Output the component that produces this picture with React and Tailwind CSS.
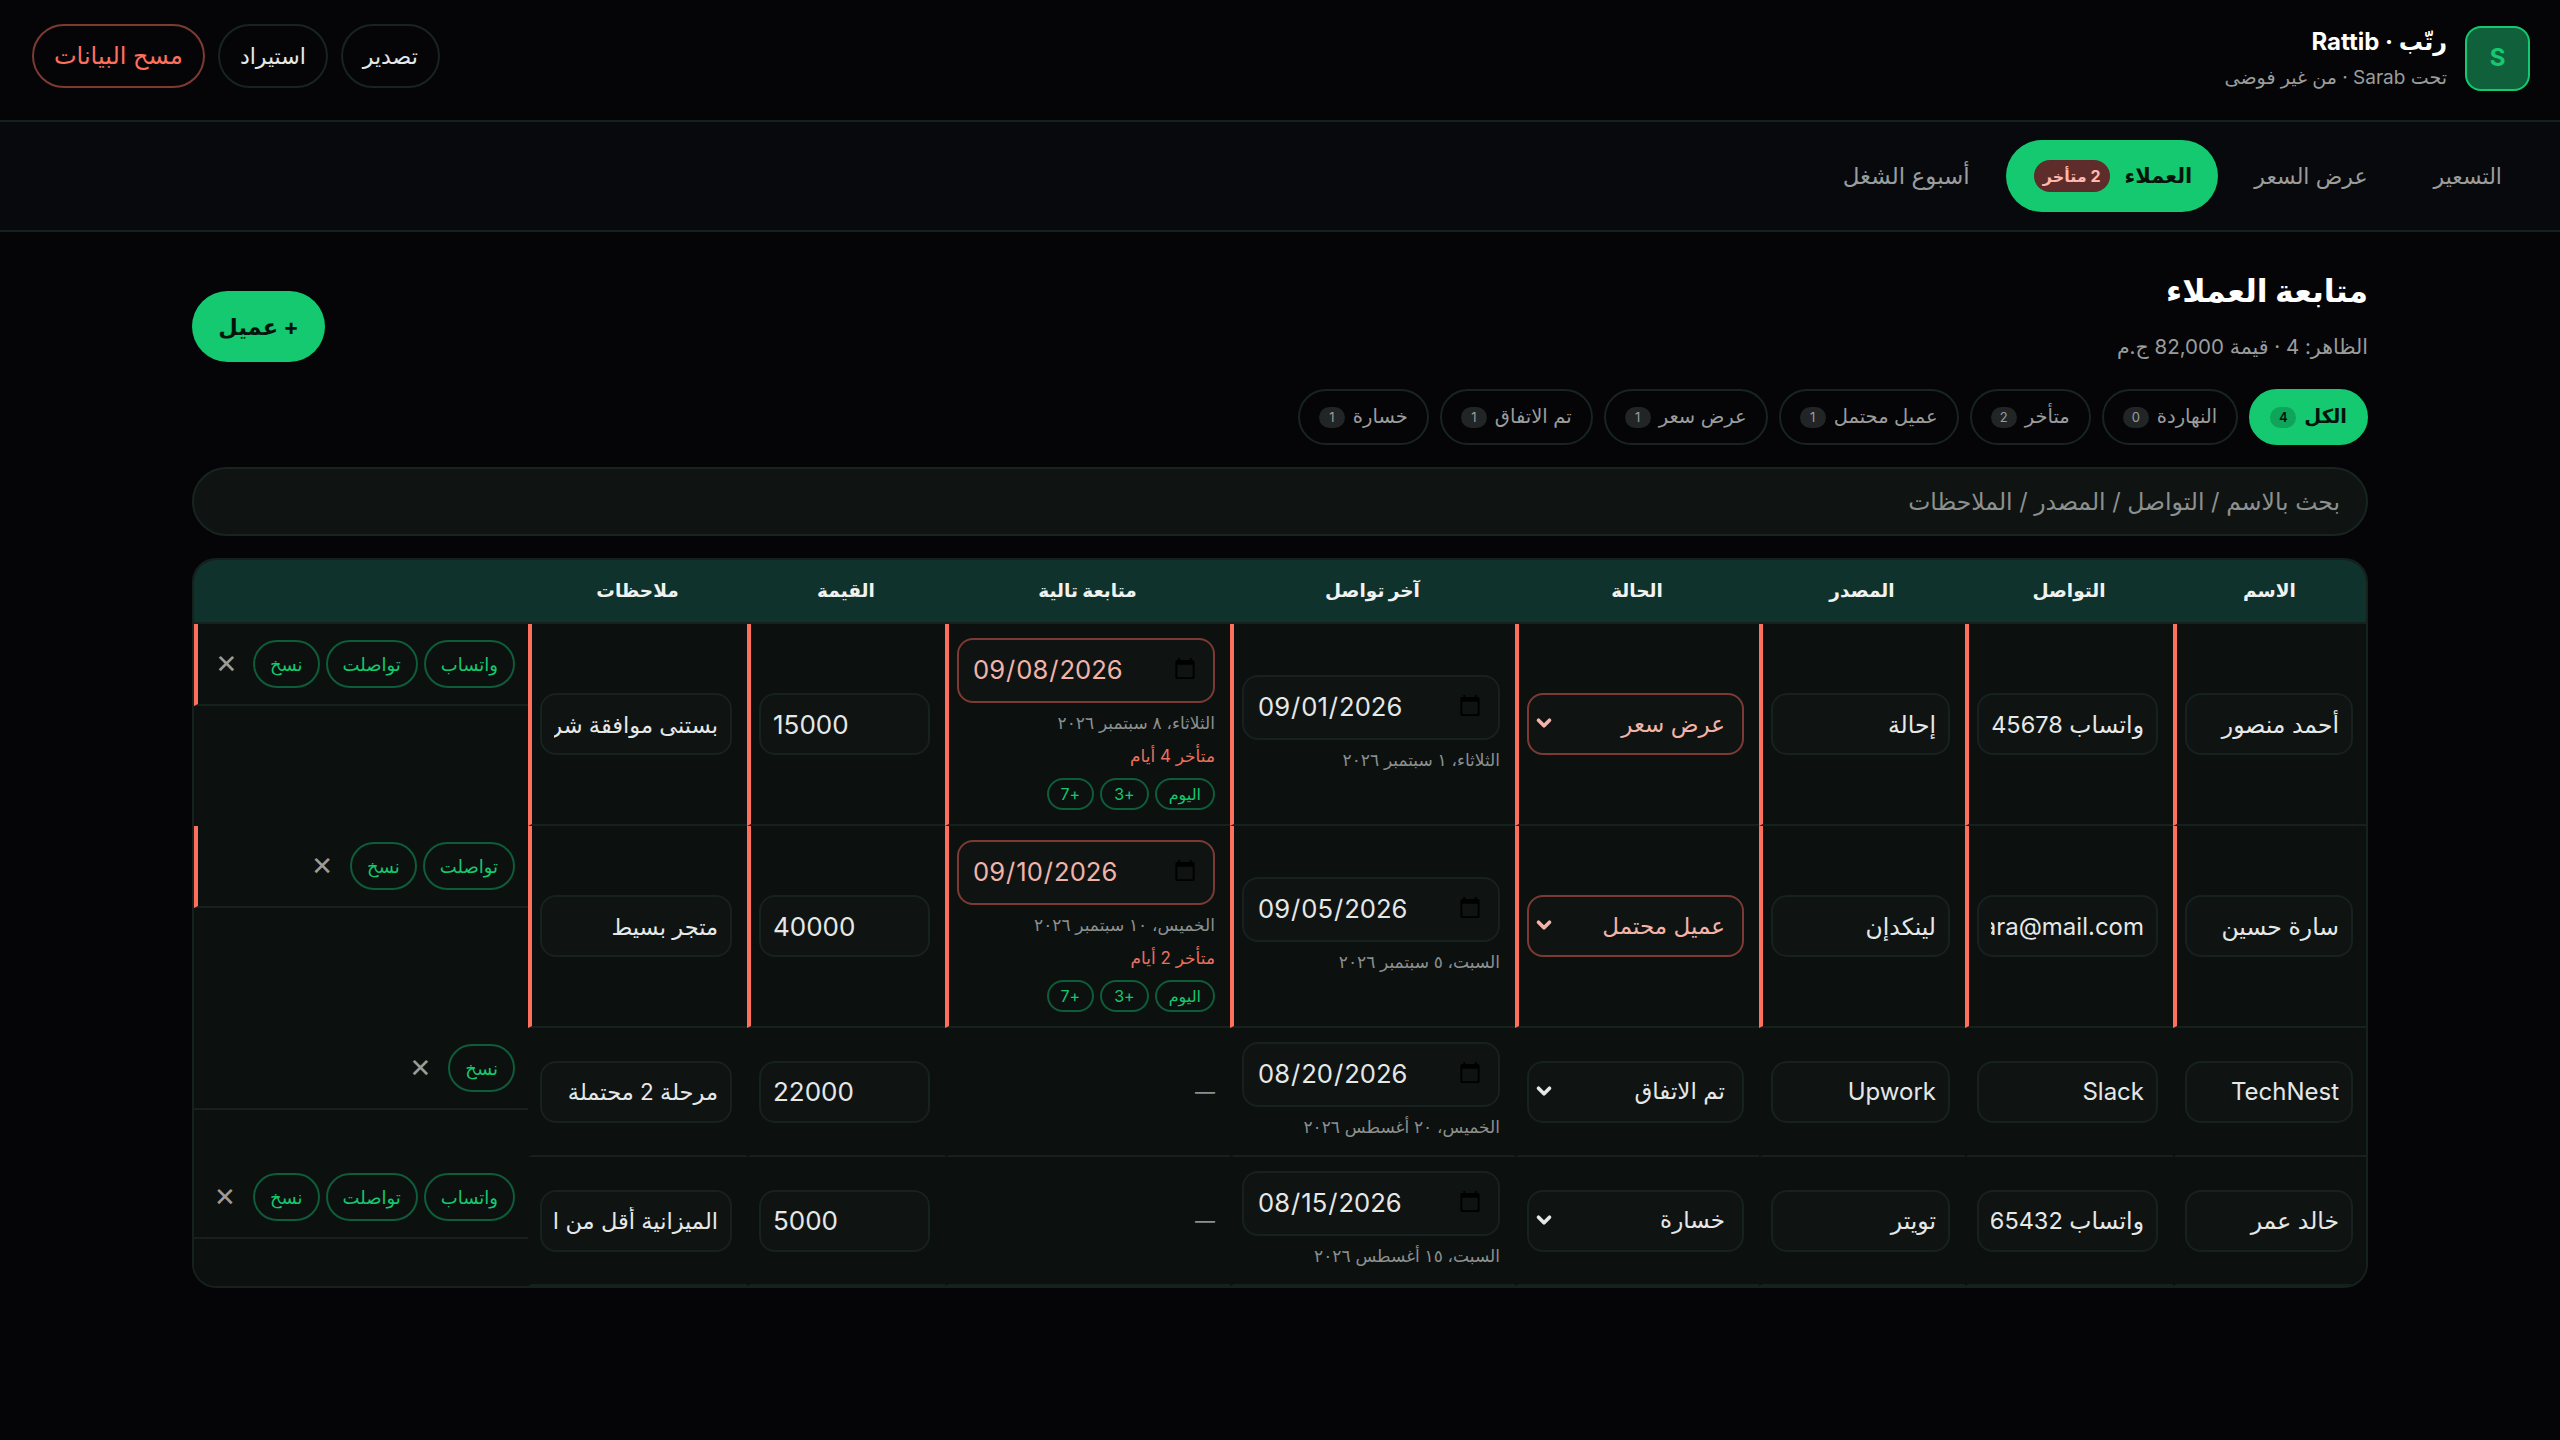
import React from "react";
import { ChevronDown } from "lucide-react";

const font = "font-['Inter','DejaVu_Sans',sans-serif]";

const filters = [
  { label: "الكل", count: 4, active: true },
  { label: "النهاردة", count: 0 },
  { label: "متأخر", count: 2 },
  { label: "عميل محتمل", count: 1 },
  { label: "عرض سعر", count: 1 },
  { label: "تم الاتفاق", count: 1 },
  { label: "خسارة", count: 1 },
];

const rows = [
  {
    name: "أحمد منصور",
    contact: "واتساب 45678",
    source: "إحالة",
    status: "عرض سعر",
    last: "2026-09-01",
    lastNote: "الثلاثاء، ١ سبتمبر ٢٠٢٦",
    next: "2026-09-08",
    nextNote: "الثلاثاء، ٨ سبتمبر ٢٠٢٦",
    late: "متأخر 4 أيام",
    value: 15000,
    notes: "بستنى موافقة شريك",
    actions: ["واتساب", "تواصلت", "نسخ"],
  },
  {
    name: "سارة حسين",
    contact: "sara@mail.com",
    source: "لينكدإن",
    status: "عميل محتمل",
    last: "2026-09-05",
    lastNote: "السبت، ٥ سبتمبر ٢٠٢٦",
    next: "2026-09-10",
    nextNote: "الخميس، ١٠ سبتمبر ٢٠٢٦",
    late: "متأخر 2 أيام",
    value: 40000,
    notes: "متجر بسيط",
    actions: ["تواصلت", "نسخ"],
  },
  {
    name: "TechNest",
    contact: "Slack",
    source: "Upwork",
    status: "تم الاتفاق",
    last: "2026-08-20",
    lastNote: "الخميس، ٢٠ أغسطس ٢٠٢٦",
    value: 22000,
    notes: "مرحلة 2 محتملة",
    actions: ["نسخ"],
  },
  {
    name: "خالد عمر",
    contact: "واتساب 65432",
    source: "تويتر",
    status: "خسارة",
    last: "2026-08-15",
    lastNote: "السبت، ١٥ أغسطس ٢٠٢٦",
    value: 5000,
    notes: "الميزانية أقل من المطلوب",
    actions: ["واتساب", "تواصلت", "نسخ"],
  },
];

const statuses = ["عميل محتمل", "عرض سعر", "تم الاتفاق", "خسارة"];
const headers = ["الاسم", "التواصل", "المصدر", "الحالة", "آخر تواصل", "متابعة تالية", "القيمة", "ملاحظات", ""];

// Arabic glyphs run wider here than Latin ones, so the two get different sizes
const Field = ({ value, small, ...props }) => {
  const latin = /^[\x00-\x7f]+$/.test(String(value));
  const numeric = typeof value === "number";
  return (
    <input
      readOnly
      defaultValue={value}
      className={`w-full h-[62px] px-[12px] rounded-[16px] border-2 border-[#17211f] bg-[#0f1413] text-[#e6e8e7] outline-none ${
        numeric ? "text-[26px]" : latin ? "text-[24px]" : small ? "text-[22.5px]" : "text-[23.5px]"
      }`}
      {...props}
    />
  );
};

const DateField = ({ value, late }) => (
  <input
    type="date"
    dir="ltr"
    defaultValue={value}
    className={`w-full h-[65px] pl-[13px] pr-[16px] rounded-[16px] border-2 bg-[#0f1413] text-[25.6px] outline-none [&::-webkit-calendar-picker-indicator]:w-[24px] [&::-webkit-calendar-picker-indicator]:h-[26px] [&::-webkit-calendar-picker-indicator]:m-0 [&::-webkit-calendar-picker-indicator]:p-0 ${
      late ? "border-[#7c3a33] text-[#f2b4a9]" : "border-[#17211f] text-[#e6e8e7]"
    }`}
  />
);

const Chip = ({ children }) => (
  <button className="h-[48px] px-[15px] rounded-full border-2 border-[#0e5c39] text-[18px] text-[#14c96f] whitespace-nowrap">
    {children}
  </button>
);

const MiniChip = ({ children }) => (
  <button className="h-[32px] px-[12px] rounded-full border-2 border-[#0e5c39] text-[16px] text-[#14c96f] whitespace-nowrap">
    {children}
  </button>
);

const Row = ({ row }) => {
  const late = Boolean(row.late);
  const cell = `pl-2 pr-[15px] py-[14px] align-middle border-b-2 border-b-[#16211e] ${
    late ? "border-l-4 border-l-[#ff6f5e]" : "border-l-4 border-l-transparent"
  }`;
  return (
    <tr className="bg-[#0c1110]">
      <td className={cell}>
        <div className="-mr-[2px]">
          <Field value={row.name} />
        </div>
      </td>
      <td className={cell}>
        <Field value={row.contact} />
      </td>
      <td className={cell}>
        <Field value={row.source} />
      </td>
      <td className={cell}>
        <div className="relative">
          <select
            defaultValue={row.status}
            className={`block w-full h-[62px] pr-[17px] pl-[34px] rounded-[16px] border-2 appearance-none bg-[#0f1413] text-[23px] outline-none ${
              late ? "border-[#7c3a33] text-[#f2b4a9]" : "border-[#17211f] text-[#e6e8e7]"
            }`}
          >
            {statuses.map((s) => (
              <option key={s}>{s}</option>
            ))}
          </select>
          <ChevronDown
            size={22}
            strokeWidth={4}
            className={`absolute left-[6px] top-[19px] ${late ? "text-[#f2b4a9]" : "text-[#e6e8e7]"}`}
          />
        </div>
      </td>
      <td className={cell}>
        <DateField value={row.last} />
        <div className="mt-[7px] h-[27px] text-[17px] leading-[27px] text-[#8c908e]">{row.lastNote}</div>
      </td>
      <td className={cell}>
        {row.next ? (
          <>
            <DateField value={row.next} late />
            <div className="mt-[7px] h-[27px] text-[17px] leading-[27px] text-[#8c908e]">{row.nextNote}</div>
            <div className="mt-[5px] h-[28px] text-[17px] leading-[28px] text-[#e8705f]">{row.late}</div>
            <div className="mt-[8px] flex gap-[6px]">
              <MiniChip>اليوم</MiniChip>
              <MiniChip>+3</MiniChip>
              <MiniChip>+7</MiniChip>
            </div>
          </>
        ) : (
          <span className="text-[20px] text-[#8c908e]">—</span>
        )}
      </td>
      <td className={cell}>
        <Field value={row.value} type="number" dir="ltr" />
      </td>
      <td className={cell}>
        <Field value={row.notes} small />
      </td>
      <td
        className={`flex items-center gap-[6px] pr-[13px] pl-2 py-[16px] border-b-2 border-b-[#16211e] ${
          late ? "border-l-4 border-l-[#ff6f5e]" : ""
        }`}
      >
        {row.actions.map((a) => (
          <Chip key={a}>{a}</Chip>
        ))}
        <button className="w-[44px] text-[26px] leading-none text-[#9a9d9c]">✕</button>
      </td>
    </tr>
  );
};

export default function App() {
  return (
    <div dir="rtl" className={`min-h-screen bg-[#050508] text-[#e6e8e7] ${font}`}>
      <header className="h-[122px] pt-[24px] px-[30px] flex items-start justify-between border-b-2 border-[#16211e]">
        <div className="flex items-center gap-[18px]">
          <div className="w-[65px] h-[65px] rounded-[16px] border-2 border-[#14c96f] bg-[#11603c] flex items-center justify-center text-[24px] font-bold text-[#14c96f]">
            S
          </div>
          <div>
            <div className="text-[24px] font-bold leading-[36px] text-white">رتّب · Rattib</div>
            <div className="mt-[4px] text-[19px] leading-[28px] text-[#9a9d9c]">تحت Sarab · من غير فوضى</div>
          </div>
        </div>
        <div className="flex items-center gap-[13px] pl-[2px]">
          <button className="h-[64px] px-[20px] rounded-full border-2 border-[#17241f] text-[22px]">تصدير</button>
          <button className="h-[64px] px-[20px] rounded-full border-2 border-[#17241f] text-[22px]">استيراد</button>
          <button className="h-[64px] px-[20px] rounded-full border-2 border-[#7c3a33] text-[24px] text-[#ff6f5e]">مسح البيانات</button>
        </div>
      </header>

      <nav className="h-[110px] pr-[28px] flex items-center gap-[6px] bg-[#08090c] border-b-2 border-[#16211e] text-[22px] text-[#9a9d9c]">
        <button className="h-[72px] px-[30px]">التسعير</button>
        <button className="h-[72px] px-[30px]">عرض السعر</button>
        <button className="h-[72px] pr-[26px] pl-[28px] rounded-full bg-[#14c96f] text-[#04140c] text-[21px] font-bold flex items-center gap-[15px]">
          العملاء
          <span className="h-[32px] px-[9px] rounded-full bg-[#5e2c2b] text-[#ffb9b0] text-[16px] font-bold leading-[32px]">2 متأخر</span>
        </button>
        <button className="h-[72px] px-[30px] text-[23px]">أسبوع الشغل</button>
      </nav>

      <main className="w-[2176px] mx-auto">
        <div className="pt-[34px] flex items-end justify-between">
          <div>
            <h1 className="text-[31.5px] leading-[50px] font-bold text-white">متابعة العملاء</h1>
            <p className="mt-[16px] text-[20.5px] leading-[30px] text-[#9a9d9c]">الظاهر: 4 · قيمة 82,000 ج.م</p>
          </div>
          <button className="h-[71px] w-[133px] rounded-full bg-[#14c96f] text-[#04140c] text-[22.5px] font-bold">+ عميل</button>
        </div>

        <div className="mt-[27px] flex gap-[11px]">
          {filters.map((f) => (
            <button
              key={f.label}
              className={`h-[56px] px-[19px] rounded-full border-2 flex items-center gap-[8px] text-[19.5px] ${
                f.active ? "bg-[#14c96f] border-[#14c96f] text-[#04140c] font-semibold" : "border-[#17241f] text-[#9a9d9c]"
              }`}
            >
              {f.label}
              <span
                className={`w-[26px] h-[21px] rounded-full text-[13px] leading-[21px] text-center ${
                  f.active ? "bg-[#10a35a] text-[#04140c]" : "bg-[#222526] text-[#9a9d9c]"
                }`}
              >
                {f.count}
              </span>
            </button>
          ))}
        </div>

        <input
          readOnly
          placeholder="بحث بالاسم / التواصل / المصدر / الملاحظات"
          className="mt-[22px] block w-full h-[69px] px-[26px] rounded-full border-2 border-[#17241f] bg-[#0f1413] text-[23.5px] outline-none placeholder:text-[#8c908e]"
        />

        <div className="mt-[22px] rounded-[24px] border-2 border-[#16211e] bg-[#0c1110] overflow-hidden">
          <table className="w-full table-fixed border-separate border-spacing-0">
            <colgroup>
              <col className="w-[193px]" />
              <col className="w-[208px]" />
              <col className="w-[206px]" />
              <col className="w-[244px]" />
              <col className="w-[285px]" />
              <col className="w-[285px]" />
              <col className="w-[198px]" />
              <col className="w-[219px]" />
              <col className="w-[334px]" />
            </colgroup>
            <thead>
              <tr className="bg-[#0f332c]">
                {headers.map((h, i) => (
                  <th key={i} className="h-[64px] text-[18.5px] font-bold text-[#f0f2f1] text-center border-b-2 border-b-[#16211e]">
                    {h}
                  </th>
                ))}
              </tr>
            </thead>
            <tbody>
              {rows.map((r) => (
                <Row key={r.name} row={r} />
              ))}
            </tbody>
          </table>
        </div>
      </main>
    </div>
  );
}
